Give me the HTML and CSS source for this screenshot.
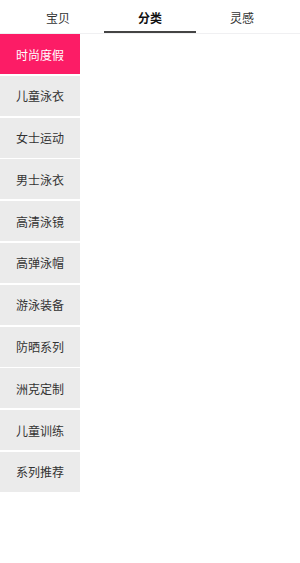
FILE: index.html
```html
<!DOCTYPE html>
<html lang="zh-CN">

<head>
    <meta charset="UTF-8">
    <meta name="viewport" content="width=device-width, initial-scale=1.0">
    <title>分类</title>
    <link rel="stylesheet" href="styles.css">
</head>

<body>
    <div class="tabs">
        <div class="tab">宝贝</div>
        <div class="tab active">分类</div>
        <div class="tab">灵感</div>
    </div>

    <div class="main">
        <ul class="side-menu">
            <li class="selected">时尚度假</li>
            <li>儿童泳衣</li>
            <li>女士运动</li>
            <li>男士泳衣</li>
            <li>高清泳镜</li>
            <li>高弹泳帽</li>
            <li>游泳装备</li>
            <li>防晒系列</li>
            <li>洲克定制</li>
            <li>儿童训练</li>
            <li>系列推荐</li>
        </ul>
        <div class="content"></div>
    </div>
</body>

</html>
```

FILE: styles.css
```css
body {
    margin: 0;
    font-family: "Noto Sans CJK SC", "Noto Sans", sans-serif;
    background-color: #fff;
    color: #333;
}

.tabs {
    display: flex;
    padding: 0 12px;
    height: 33px;
    border-bottom: 1px solid #f0f0f2;
}

.tab {
    width: 92px;
    display: flex;
    align-items: center;
    justify-content: center;
    font-size: 12px;
    color: #333;
    box-sizing: border-box;
    padding-top: 1px;
}

.tab.active {
    font-weight: bold;
    color: #111;
    border-bottom: 2px solid #444;
    padding-top: 3px;
}

.main {
    display: flex;
}

.side-menu {
    list-style: none;
    margin: 0;
    padding: 0;
    width: 80px;
}

.side-menu li {
    height: 40px;
    margin-bottom: 1.8px;
    display: flex;
    align-items: center;
    justify-content: center;
    font-size: 12px;
    background-color: #ebebeb;
    color: #333;
}

.side-menu li.selected {
    background-color: #fc1c66;
    color: #fff;
}

.content {
    flex: 1;
}
```
